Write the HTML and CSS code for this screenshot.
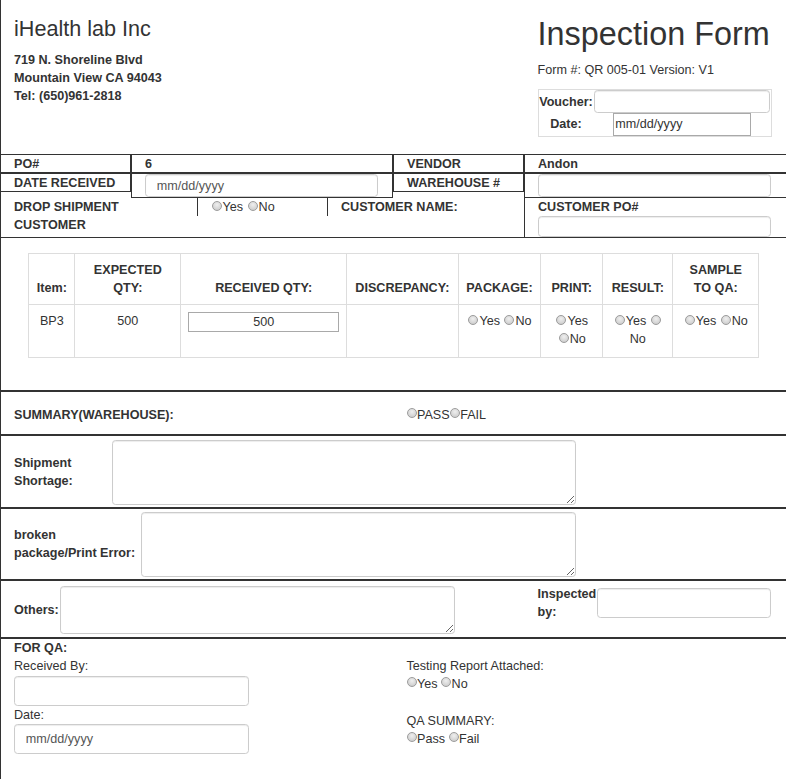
FILE: index.html
```html
<!DOCTYPE html>
<html>
<head>
<meta charset="utf-8">
<title>Inspection Form</title>
<link rel="stylesheet" href="styles.css">
</head>
<body>
<div class="page">
  <header class="head">
    <div class="company">
      <h3 class="company-name">iHealth lab Inc</h3>
      <p class="address">719 N. Shoreline Blvd<br>Mountain View CA 94043<br>Tel: (650)961-2818</p>
    </div>
    <div class="formhead">
      <h1 class="title">Inspection Form</h1>
      <p class="formno">Form #: QR 005-01 Version: V1</p>
      <div class="voucher">
        <span class="v-label">Voucher:</span>
        <div class="v-cell v-cell-top"><input class="v-input" type="text"></div>
        <span class="v-label">Date:</span>
        <div class="v-cell"><input class="v-date" type="text" value="mm/dd/yyyy"></div>
      </div>
    </div>
  </header>

  <section class="po">
    <div class="po-row">
      <div class="c c2 first">PO#</div>
      <div class="c c4">6</div>
      <div class="c c2">VENDOR</div>
      <div class="c c4 last">Andon</div>
    </div>
    <div class="po-row">
      <div class="c c2 first">DATE RECEIVED</div>
      <div class="c c4 c-in"><input class="fc fc-po" type="text" value="mm/dd/yyyy"></div>
      <div class="c c2">WAREHOUSE #</div>
      <div class="c c4 last c-in"><input class="fc fc-po" type="text"></div>
    </div>
    <div class="po-row po-row3">
      <div class="d d3 first">DROP SHIPMENT CUSTOMER</div>
      <div class="d d2 yn"><input type="radio" class="rd" name="drop">Yes <input type="radio" class="rd" name="drop">No</div>
      <div class="d d3 name">CUSTOMER NAME:</div>
      <div class="d cpo">CUSTOMER PO#<input class="fc fc-cpo" type="text"></div>
    </div>
  </section>

  <section class="items">
    <table class="itable">
      <colgroup>
        <col class="w-item"><col class="w-exp"><col class="w-rec"><col class="w-dis"><col class="w-pkg"><col class="w-prt"><col class="w-res"><col class="w-smp">
      </colgroup>
      <thead>
        <tr>
          <th>Item:</th>
          <th>EXPECTED QTY:</th>
          <th>RECEIVED QTY:</th>
          <th>DISCREPANCY:</th>
          <th>PACKAGE:</th>
          <th>PRINT:</th>
          <th>RESULT:</th>
          <th>SAMPLE TO QA:</th>
        </tr>
      </thead>
      <tbody>
        <tr>
          <td>BP3</td>
          <td>500</td>
          <td><input class="qty" type="text" value="500"></td>
          <td></td>
          <td><input type="radio" class="rd" name="pkg">Yes <input type="radio" class="rd" name="pkg">No</td>
          <td><input type="radio" class="rd" name="prt">Yes <input type="radio" class="rd" name="prt">No</td>
          <td><input type="radio" class="rd" name="res">Yes <input type="radio" class="rd" name="res">No</td>
          <td><input type="radio" class="rd" name="smp">Yes <input type="radio" class="rd" name="smp">No</td>
        </tr>
      </tbody>
    </table>
  </section>

  <section class="summary">
    <div class="sum-left">SUMMARY(WAREHOUSE):</div>
    <div class="sum-right"><input type="radio" class="rd rd-flush" name="sum">PASS<input type="radio" class="rd rd-flush" name="sum">FAIL</div>
  </section>

  <section class="sec sec-ship">
    <span class="lbl lbl-ship">Shipment Shortage:</span>
    <textarea class="fc ta ta-ship"></textarea>
  </section>

  <section class="sec sec-broken">
    <span class="lbl lbl-broken">broken package/Print Error:</span>
    <textarea class="fc ta ta-broken"></textarea>
  </section>

  <section class="sec sec-others">
    <div class="oth-left">
      <span class="lbl">Others:</span>
      <textarea class="fc ta ta-oth"></textarea>
    </div>
    <div class="oth-right">
      <span class="lbl lbl-insp">Inspected by:</span>
      <input class="fc fc-insp" type="text">
    </div>
  </section>

  <section class="qa">
    <div class="qa-title">FOR QA:</div>
    <div class="qa-cols">
      <div class="qa-left">
        <div class="qa-line">Received By:</div>
        <input class="fc fc-qa" type="text">
        <div class="qa-line">Date:</div>
        <input class="fc fc-qa" type="text" value="mm/dd/yyyy">
      </div>
      <div class="qa-right">
        <div class="qa-line">Testing Report Attached:</div>
        <div class="qa-line"><input type="radio" class="rd rd-sm" name="rep">Yes <input type="radio" class="rd rd-sm" name="rep">No</div>
        <div class="qa-line qa-gap">QA SUMMARY:</div>
        <div class="qa-line"><input type="radio" class="rd rd-sm" name="qas">Pass <input type="radio" class="rd rd-sm" name="qas">Fail</div>
      </div>
    </div>
  </section>
</div>
</body>
</html>
```

FILE: styles.css
```css
* { box-sizing: border-box; }

html, body {
  margin: 0;
  padding: 0;
  background: #fff;
}

body {
  font-family: "Liberation Sans", Arial, Helvetica, sans-serif;
  font-size: 12.6px;
  line-height: 18px;
  color: #333;
}

input, textarea {
  font-family: inherit;
  font-size: 12.6px;
  margin: 0;
  outline: none;
}

.page {
  width: 786px;
  min-height: 779px;
  border-left: 1px solid #333;
  overflow: hidden;
}

/* ---------- header ---------- */
.head {
  display: flex;
  height: 154px;
}

.company {
  width: 523px;
  padding-left: 13px;
}

.company-name {
  margin: 17.3px 0 9.8px;
  font-size: 21.6px;
  line-height: 23.76px;
  font-weight: 400;
}

.address {
  margin: 0;
  font-weight: 700;
}

.formhead {
  width: 262px;
  padding-left: 13.5px;
}

.title {
  margin: 16.6px 0 8.8px;
  font-size: 32.4px;
  line-height: 35.64px;
  font-weight: 400;
  white-space: nowrap;
}

.formno {
  margin: 0 0 10.2px;
}

.voucher {
  display: grid;
  grid-template-columns: 55px 177px;
  width: 234px;
  border: 1px solid #ddd;
}

.v-label {
  display: flex;
  align-items: center;
  justify-content: center;
  font-weight: 700;
  white-space: nowrap;
}

.v-cell {
  display: flex;
  justify-content: center;
}

.v-cell-top {
  justify-content: flex-start;
  height: 23px;
}

.v-input {
  width: 176px;
  height: 22.3px;
  border: 1px solid #ccc;
  border-radius: 3.6px;
  box-shadow: inset 0 1px 1px rgba(0, 0, 0, .075);
  padding: 0 4px;
}

.v-date {
  width: 137.4px;
  height: 22.4px;
  border: 1px solid #a9a9a9;
  padding: 0 1px;
  color: #333;
}

/* ---------- form controls ---------- */
.fc {
  border: 1px solid #ccc;
  border-radius: 3.6px;
  box-shadow: inset 0 1px 1px rgba(0, 0, 0, .075);
  background: #fff;
  color: #555;
  padding: 0 10.8px;
}

/* ---------- PO block ---------- */
.po-row {
  display: flex;
  align-items: flex-start;
}

.c {
  border: 1px solid #333;
  padding: 1px 13px 0 13px;
  line-height: 16px;
  font-weight: 700;
  white-space: nowrap;
}

.c2 { width: 131px; }
.c4 { width: 262px; }

.c.first {
  width: 130px;
  border-left: 0;
}

.c.last { border-right: 0; }

.c.c-in { padding-top: 0; }

.fc-po {
  display: block;
  width: 233px;
  height: 23px;
}

.po-row3 {
  border-bottom: 1px solid #333;
}

.d {
  padding: 0 13px;
  font-weight: 700;
}

.d3 { width: 196.5px; }
.d.first { width: 195.5px; }
.d2 { width: 131px; }
.d3.name { padding-left: 13.5px; }

.yn {
  height: 18px;
  border-left: 1px solid #333;
  border-right: 1px solid #333;
  font-weight: 400;
  white-space: nowrap;
}

.cpo {
  width: 262px;
  border-left: 1px solid #333;
  align-self: stretch;
}

.fc-cpo {
  display: block;
  width: 233px;
  height: 21px;
}

/* ---------- radio ---------- */
.rd {
  -webkit-appearance: none;
  appearance: none;
  display: inline-block;
  width: 10px;
  height: 10px;
  margin: 0 1px 0.5px;
  padding: 0;
  border: 1px solid #9c9c9c;
  border-radius: 50%;
  background: radial-gradient(circle at 50% 35%, #efefef 0, #d6d6d6 60%, #c6c6c6 100%);
  vertical-align: baseline;
}

.rd-flush { margin: 0 0.5px 0.5px 0; }
.rd-sm { margin: 0 0.5px 0.5px 0; }

/* ---------- items table ---------- */
.items {
  padding: 15.3px 27.7px 31.7px 27.3px;
}

.itable {
  width: 730px;
  table-layout: fixed;
  border-collapse: collapse;
}

.w-item { width: 46px; }
.w-exp { width: 106px; }
.w-rec { width: 165.7px; }
.w-dis { width: 111.7px; }
.w-pkg { width: 82.6px; }
.w-prt { width: 62px; }
.w-res { width: 70px; }
.w-smp { width: 86px; }

.itable th,
.itable td {
  border: 1px solid #ddd;
  padding: 7px;
  text-align: center;
  line-height: 18px;
}

.itable th {
  font-weight: 700;
  vertical-align: bottom;
}

.itable td {
  vertical-align: top;
  height: 52.6px;
}

.qty {
  display: block;
  width: 100%;
  height: 20px;
  border: 1px solid #a9a9a9;
  padding: 0;
  text-align: center;
  color: #333;
}

/* ---------- summary ---------- */
.summary {
  display: flex;
  border-top: 2px solid #333;
  padding: 14px 0 10px;
}

.sum-left {
  width: 392px;
  padding-left: 13px;
  font-weight: 700;
}

.sum-right {
  padding-left: 13.5px;
  white-space: nowrap;
}

/* ---------- text sections ---------- */
.sec {
  display: flex;
  align-items: center;
  border-top: 2px solid #333;
  padding-left: 13px;
}

.lbl { font-weight: 700; }

.sec-ship { padding-top: 4px; padding-bottom: 2px; }
.sec-broken { padding-top: 3px; padding-bottom: 2px; }

.lbl-ship { width: 98px; }
.lbl-broken { width: 127px; }

.ta {
  display: block;
  padding: 5px 10.8px;
}

.ta-ship { width: 464px; height: 65px; }
.ta-broken { width: 435px; height: 65px; }

.sec-others {
  align-items: flex-start;
  padding-top: 4px;
  padding-bottom: 2.5px;
}

.oth-left {
  display: flex;
  align-items: center;
  width: 523.5px;
  margin-top: 1px;
}

.ta-oth {
  width: 395px;
  height: 48.5px;
  margin-left: 1.5px;
}

.oth-right {
  display: flex;
  align-items: flex-start;
}

.lbl-insp { width: 59px; }

.fc-insp {
  width: 174.5px;
  height: 30px;
  margin-top: 3px;
}

/* ---------- QA ---------- */
.qa {
  border-top: 2px solid #333;
  padding: 0.4px 0 0 13px;
}

.qa-title { font-weight: 700; }

.qa-cols { display: flex; }

.qa-left { width: 379px; }

.fc-qa {
  display: block;
  width: 235px;
  height: 30px;
  margin-top: 0.7px;
}

.qa-right {
  padding-left: 13.5px;
}

.qa-line { white-space: nowrap; }

.qa-gap { margin-top: 18.6px; }
```
